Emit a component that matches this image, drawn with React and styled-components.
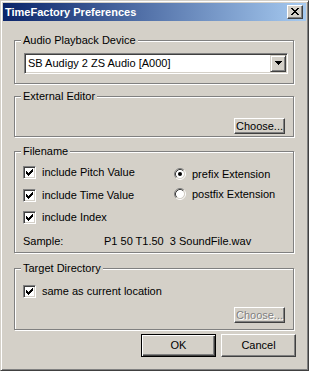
import React from "react";
import styled, { createGlobalStyle, css } from "styled-components";

const GlobalStyle = createGlobalStyle`
  html, body {
    margin: 0;
    padding: 0;
    background: #d4d0c8;
  }
  body {
    font-family: "Liberation Sans", Arial, sans-serif;
    font-size: 11px;
    color: #000;
  }
`;

const Window = styled.div`
  box-sizing: border-box;
  width: 309px;
  height: 371px;
  padding: 2px;
  background: #d4d0c8;
  border: 1px solid;
  border-color: #d4d0c8 #404040 #404040 #d4d0c8;
  box-shadow: inset 1px 1px 0 #fff, inset -1px -1px 0 #808080;
  display: flex;
  flex-direction: column;
`;

const TitleBar = styled.div`
  height: 18px;
  flex: none;
  display: flex;
  align-items: center;
  justify-content: space-between;
  padding: 0 3px 0 2px;
  background: linear-gradient(to right, #0a246a, #a6caf0);
  color: #fff;
  font-weight: bold;
  line-height: 13px;
`;

const CloseButton = styled.div`
  box-sizing: border-box;
  width: 16px;
  height: 14px;
  padding: 2px 0 0 3px;
  background: #d4d0c8;
  border: 1px solid;
  border-color: #fff #404040 #404040 #fff;
  box-shadow: inset -1px -1px 0 #808080;

  svg {
    display: block;
  }
`;

const Body = styled.div`
  display: flex;
  flex-direction: column;
  padding: 19px 12px 0 11px;
`;

const Group = styled.div`
  box-sizing: border-box;
  height: ${(p) => p.$h}px;
  margin-top: ${(p) => p.$mt || 0}px;
  border: 1px solid #808080;
  box-shadow: inset 1px 1px 0 #fff, 1px 1px 0 #fff;
  display: flex;
  flex-direction: column;
`;

const Legend = styled.span`
  align-self: flex-start;
  margin: -7px 0 0 6px;
  padding: 0 2px;
  line-height: 13px;
  background: #d4d0c8;
`;

const Combo = styled.div`
  box-sizing: border-box;
  width: 264px;
  height: 21px;
  margin: 6px 0 0 9px;
  padding: 1px;
  display: flex;
  align-items: center;
  background: #fff;
  border: 1px solid;
  border-color: #808080 #fff #fff #808080;
  box-shadow: inset 1px 1px 0 #404040, inset -1px -1px 0 #d4d0c8;
`;

const ComboText = styled.span`
  flex: 1;
  padding-left: 2px;
  line-height: 13px;
`;

const DropButton = styled.span`
  box-sizing: border-box;
  width: 16px;
  height: 17px;
  padding: 5px 0 0 4px;
  background: #d4d0c8;
  border: 1px solid;
  border-color: #d4d0c8 #404040 #404040 #d4d0c8;
  box-shadow: inset 1px 1px 0 #fff, inset -1px -1px 0 #808080;

  svg {
    display: block;
  }
`;

const ButtonRow = styled.div`
  display: flex;
  justify-content: flex-end;
  margin-top: ${(p) => p.$mt}px;
  padding-right: 8px;
`;

const Button = styled.button`
  box-sizing: border-box;
  width: ${(p) => p.$w}px;
  height: ${(p) => p.$h}px;
  margin: 0;
  padding: 0;
  font: inherit;
  line-height: 13px;
  color: #000;
  background: #d4d0c8;
  border: 1px solid;
  border-color: #fff #404040 #404040 #fff;
  box-shadow: inset -1px -1px 0 #808080;

  ${(p) =>
    p.$default &&
    css`
      border-color: #000;
      box-shadow: inset 1px 1px 0 #fff, inset -1px -1px 0 #404040,
        inset -2px -2px 0 #808080;
    `}

  &:disabled {
    color: #808080;
    text-shadow: 1px 1px 0 #fff;
  }
`;

const Columns = styled.div`
  display: flex;
  margin-top: ${(p) => p.$mt}px;
  padding-left: 8px;
`;

const CheckList = styled.div`
  width: 151px;
  display: flex;
  flex-direction: column;
  gap: 9px;
`;

const RadioList = styled.div`
  display: flex;
  flex-direction: column;
  gap: 8px;
  margin-top: 2px;
`;

const Option = styled.label`
  display: flex;
  align-items: center;
  height: ${(p) => p.$h}px;
  gap: ${(p) => p.$gap}px;
  margin-top: ${(p) => p.$mt || 0}px;
  line-height: 13px;
  white-space: nowrap;
`;

const Box = styled.span`
  box-sizing: border-box;
  flex: none;
  width: 13px;
  height: 13px;
  padding: 2px 0 0 2px;
  background: #fff;
  border: 1px solid;
  border-color: #808080 #fff #fff #808080;
  box-shadow: inset 1px 1px 0 #404040, inset -1px -1px 0 #d4d0c8;

  svg {
    display: block;
  }
`;

const SampleRow = styled.div`
  display: flex;
  margin-top: 11px;
  padding-left: 8px;
  line-height: 13px;
`;

const SampleLabel = styled.span`
  width: 81px;
`;

const SampleValue = styled.span`
  white-space: pre;
`;

const Footer = styled.div`
  display: flex;
  justify-content: flex-end;
  gap: 5px;
  margin: 4px -2px 0 0;
`;

const CHECK_COLS = [2, 3, 4, 3, 2, 1, 0];

const CheckMark = () => (
  <svg width="7" height="7" viewBox="0 0 7 7" shapeRendering="crispEdges">
    {CHECK_COLS.map((top, i) => (
      <rect key={i} x={i} y={top} width="1" height="3" fill="#000" />
    ))}
  </svg>
);

const Checkbox = ({ children, mt }) => (
  <Option $h={13} $gap={6} $mt={mt}>
    <Box>
      <CheckMark />
    </Box>
    {children}
  </Option>
);

const RadioDot = ({ checked }) => (
  <svg width="12" height="12" viewBox="0 0 12 12">
    <circle cx="6" cy="6" r="4.2" fill="#fff" />
    <path d="M2.11 9.89 A5.5 5.5 0 0 1 9.89 2.11" stroke="#808080" fill="none" />
    <path d="M9.89 2.11 A5.5 5.5 0 0 1 2.11 9.89" stroke="#fff" fill="none" />
    <path d="M2.82 9.18 A4.5 4.5 0 0 1 9.18 2.82" stroke="#404040" fill="none" />
    <path d="M9.18 2.82 A4.5 4.5 0 0 1 2.82 9.18" stroke="#d4d0c8" fill="none" />
    {checked && <circle cx="6" cy="6" r="2" fill="#000" />}
  </svg>
);

const Radio = ({ children, checked }) => (
  <Option $h={12} $gap={6}>
    <RadioDot checked={checked} />
    {children}
  </Option>
);

const X_ROWS = [
  [0, 1, 6, 7],
  [1, 2, 5, 6],
  [2, 3, 4, 5],
  [3, 4],
  [2, 3, 4, 5],
  [1, 2, 5, 6],
  [0, 1, 6, 7],
];

const CloseGlyph = () => (
  <svg width="8" height="7" viewBox="0 0 8 7" shapeRendering="crispEdges">
    {X_ROWS.map((cols, y) =>
      cols.map((x) => <rect key={`${x}-${y}`} x={x} y={y} width="1" height="1" fill="#000" />)
    )}
  </svg>
);

const Arrow = () => (
  <svg width="7" height="4" viewBox="0 0 7 4" shapeRendering="crispEdges">
    <rect x="0" y="0" width="7" height="1" fill="#000" />
    <rect x="1" y="1" width="5" height="1" fill="#000" />
    <rect x="2" y="2" width="3" height="1" fill="#000" />
    <rect x="3" y="3" width="1" height="1" fill="#000" />
  </svg>
);

const App = () => {
  return (
    <>
      <GlobalStyle />
      <Window>
        <TitleBar>
          <span>TimeFactory Preferences</span>
          <CloseButton>
            <CloseGlyph />
          </CloseButton>
        </TitleBar>

        <Body>
          <Group $h={44}>
            <Legend>Audio Playback Device</Legend>
            <Combo>
              <ComboText>SB Audigy 2 ZS Audio [A000]</ComboText>
              <DropButton>
                <Arrow />
              </DropButton>
            </Combo>
          </Group>

          <Group $h={41} $mt={12}>
            <Legend>External Editor</Legend>
            <ButtonRow $mt={15}>
              <Button $w={51} $h={16}>Choose...</Button>
            </ButtonRow>
          </Group>

          <Group $h={102} $mt={14}>
            <Legend>Filename</Legend>
            <Columns $mt={8}>
              <CheckList>
                <Checkbox>include Pitch Value</Checkbox>
                <Checkbox mt={1}>include Time Value</Checkbox>
                <Checkbox>include Index</Checkbox>
              </CheckList>
              <RadioList>
                <Radio checked>prefix Extension</Radio>
                <Radio>postfix Extension</Radio>
              </RadioList>
            </Columns>
            <SampleRow>
              <SampleLabel>Sample:</SampleLabel>
              <SampleValue>P1 50 T1.50  3 SoundFile.wav</SampleValue>
            </SampleRow>
          </Group>

          <Group $h={62} $mt={15}>
            <Legend>Target Directory</Legend>
            <Columns $mt={10}>
              <Checkbox>same as current location</Checkbox>
            </Columns>
            <ButtonRow $mt={9}>
              <Button $w={51} $h={16} disabled>
                Choose...
              </Button>
            </ButtonRow>
          </Group>

          <Footer>
            <Button $w={75} $h={23} $default>
              OK
            </Button>
            <Button $w={75} $h={23}>
              Cancel
            </Button>
          </Footer>
        </Body>
      </Window>
    </>
  );
};

export default App;
